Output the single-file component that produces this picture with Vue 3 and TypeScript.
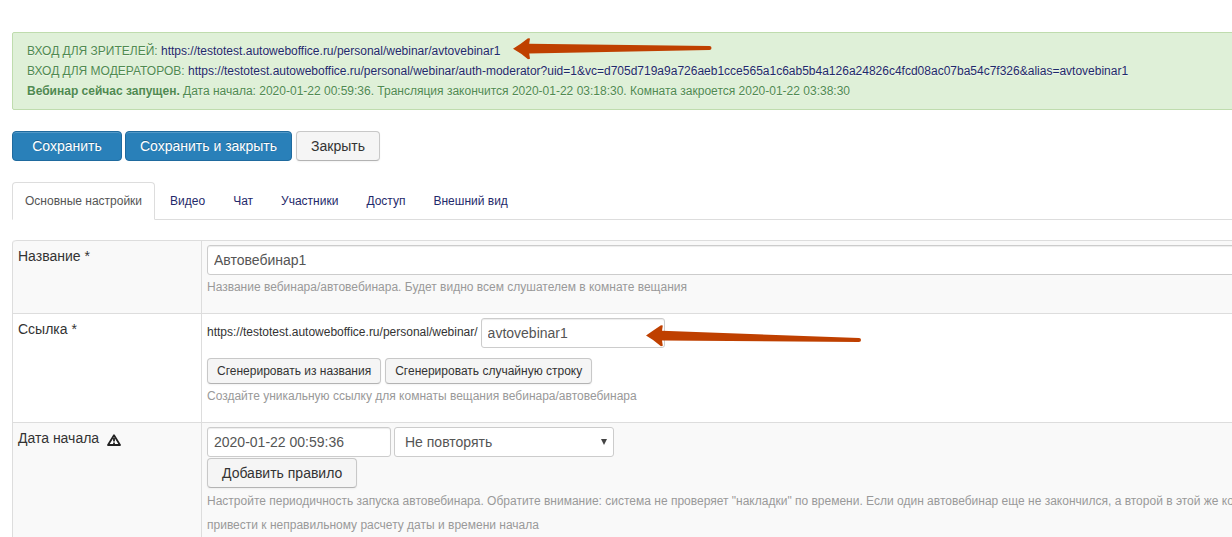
<script setup lang="ts">
import { ref } from 'vue'

const site = 'https://testotest.autoweboffice.ru/personal/webinar/'
const moderatorUrl =
  site + 'auth-moderator?uid=1&vc=d705d719a9a726aeb1cce565a1c6ab5b4a126a24826c4fcd08ac07ba54c7f326&alias=avtovebinar1'

const tabs = ['Основные настройки', 'Видео', 'Чат', 'Участники', 'Доступ', 'Внешний вид']
const activeTab = ref(0)

const title = ref('Автовебинар1')
const slug = ref('avtovebinar1')
const startDate = ref('2020-01-22 00:59:36')
const repeat = ref('Не повторять')
</script>

<template>
  <main class="page">
    <section class="alert">
      <p>
        ВХОД ДЛЯ ЗРИТЕЛЕЙ:
        <span class="anchor"><a :href="site + 'avtovebinar1'">{{ site }}avtovebinar1</a>
          <svg class="arrow arrow-viewers" width="200" height="22" viewBox="0 0 200 22" aria-hidden="true">
            <path d="M0 10.7 Q8 6 15 .3 L17 .5 L16.2 5.8 L196.5 8 Q198.5 8 198.5 10 Q198.5 12 196.5 12 L16.2 15.5 L17 20.8 L15 21.3 Q8 15 0 10.7Z" />
          </svg>
        </span>
      </p>
      <p>ВХОД ДЛЯ МОДЕРАТОРОВ: <a :href="moderatorUrl">{{ moderatorUrl }}</a></p>
      <p>
        <strong>Вебинар сейчас запущен.</strong> Дата начала: 2020-01-22 00:59:36. Трансляция закончится
        2020-01-22 03:18:30. Комната закроется 2020-01-22 03:38:30
      </p>
    </section>

    <form @submit.prevent>
      <div class="actions">
        <button class="btn primary save" type="submit">Сохранить</button>
        <button class="btn primary" type="submit">Сохранить и закрыть</button>
        <button class="btn close" type="button">Закрыть</button>
      </div>

      <nav class="tabs">
        <a
          v-for="(tab, i) in tabs"
          :key="tab"
          href="#"
          :class="{ active: i === activeTab }"
          @click.prevent="activeTab = i"
        >{{ tab }}</a>
      </nav>

      <table class="settings">
        <tbody>
          <tr>
            <th scope="row"><label for="title">Название *</label></th>
            <td>
              <input id="title" v-model="title" class="wide" type="text" />
              <p class="help">Название вебинара/автовебинара. Будет видно всем слушателем в комнате вещания</p>
            </td>
          </tr>
          <tr>
            <th scope="row"><label for="slug">Ссылка *</label></th>
            <td>
              <div class="line slug-line">
                <span class="prefix">{{ site }}</span>
                <span class="anchor">
                  <input id="slug" v-model="slug" type="text" />
                  <svg class="arrow arrow-slug" width="216" height="22" viewBox="0 0 216 22" aria-hidden="true">
                    <path d="M0 10.5 Q8 5 15 .3 L16.8 .6 L16 5.8 L213 12.9 Q215 13 215 15 Q215 17 213 17 L16 15.4 L16.8 20.8 L15 21.3 Q8 15 0 10.5Z" />
                  </svg>
                </span>
              </div>
              <div class="line buttons">
                <button class="btn small" type="button">Сгенерировать из названия</button>
                <button class="btn small" type="button">Сгенерировать случайную строку</button>
              </div>
              <p class="help">Создайте уникальную ссылку для комнаты вещания вебинара/автовебинара</p>
            </td>
          </tr>
          <tr>
            <th scope="row">
              <label for="start">Дата начала</label>
              <svg class="warn" width="14" height="12" viewBox="0 0 14 12" aria-hidden="true">
                <path d="M7 1.2 L13 11 H1Z" fill="#fff" stroke="#222" stroke-width="1.8" stroke-linejoin="round" />
                <path d="M7 4 V7.5 M7 8.5 V10" stroke="#222" stroke-width="1.8" />
              </svg>
            </th>
            <td>
              <div class="line date-line">
                <input id="start" v-model="startDate" type="text" />
                <span class="select">
                  <select v-model="repeat" aria-label="Повтор">
                    <option>Не повторять</option>
                  </select>
                  <svg width="6" height="6" viewBox="0 0 6 6" aria-hidden="true"><path d="M0 0H6L3 6Z" fill="#444" /></svg>
                </span>
              </div>
              <button class="btn rule" type="button">Добавить правило</button>
              <p class="help">
                Настройте периодичность запуска автовебинара. Обратите внимание: система не проверяет "накладки" по
                времени. Если один автовебинар еще не закончился, а второй в этой же ко<br />
                привести к неправильному расчету даты и времени начала
              </p>
            </td>
          </tr>
        </tbody>
      </table>
    </form>
  </main>
</template>

<style>
body {
  overflow: hidden;
  background: #fff;
}
</style>

<style scoped>
.page {
  margin-right: -24px;
  padding: 32px 0 0 12px;
  font: 12px/20px "Liberation Sans", Arial, sans-serif;
  color: #333;
}
p {
  margin: 0;
}
a {
  color: #1f2a6b;
  text-decoration: none;
}
.alert {
  padding: 8px 14px;
  border: 1px solid #bfdcae;
  border-radius: 2px;
  background: #dff0d8;
  color: #4f8a50;
  white-space: nowrap;
  text-shadow: 0 1px 0 rgba(255, 255, 255, 0.5);
}
.anchor {
  position: relative;
  display: inline-block;
}
.arrow {
  position: absolute;
  fill: #bf4000;
}
.arrow-viewers {
  left: calc(100% + 13px);
  top: -3px;
}
.arrow-slug {
  left: 165px;
  top: 7px;
}
.actions {
  display: flex;
  gap: 3px;
  margin-top: 21px;
}
.btn {
  height: 30px;
  padding: 0 14px;
  border: 1px solid #c8c8c8;
  border-bottom-color: #b3b3b3;
  border-radius: 4px;
  background: #f5f5f5;
  color: #333;
  font: 14px/20px "Liberation Sans", Arial, sans-serif;
  white-space: nowrap;
  box-shadow: 0 1px 2px rgba(0, 0, 0, 0.05);
}
.primary {
  border-color: #1f6a9e;
  background: #2980b9;
  color: #fff;
  box-shadow: inset 0 1px 0 rgba(255, 255, 255, 0.2);
  text-shadow: 0 -1px 0 rgba(0, 0, 0, 0.25);
}
.save {
  min-width: 110px;
}
.close {
  margin-left: 1px;
}
.small {
  height: 26px;
  padding: 0 9px;
  font-size: 12px;
}
.tabs {
  display: flex;
  gap: 2px;
  margin-top: 21px;
  border-bottom: 1px solid #ddd;
}
.tabs a {
  margin-bottom: -1px;
  padding: 8px 12px;
  border: 1px solid transparent;
  border-radius: 4px 4px 0 0;
}
.tabs a.active {
  border-color: #ddd #ddd #fff;
  background: #fff;
  color: #555;
}
.settings {
  width: 100%;
  margin-top: 20px;
  border: 1px solid #ddd;
  border-top: 0;
  border-radius: 4px;
  border-spacing: 0;
  table-layout: fixed;
}
th,
td {
  padding: 4px 5px;
  border-top: 1px solid #ddd;
  text-align: left;
  vertical-align: top;
}
th {
  width: 178px;
  font-size: 14px;
  font-weight: 400;
  line-height: 22px;
}
td {
  border-left: 1px solid #ddd;
  white-space: nowrap;
}
tr:first-child th {
  border-top-left-radius: 4px;
}
tr:nth-child(odd) > * {
  background: #f9f9f9;
}
input,
select {
  display: block;
  box-sizing: border-box;
  width: 184px;
  height: 30px;
  padding: 4px 6px;
  border: 1px solid #ccc;
  border-radius: 3px;
  background: #fff;
  color: #555;
  font: 14px/20px "Liberation Sans", Arial, sans-serif;
  box-shadow: inset 0 1px 1px rgba(0, 0, 0, 0.075);
}
.wide {
  width: 100%;
}
.help {
  margin-bottom: 10px;
  line-height: 24px;
  color: #999;
}
.line {
  display: flex;
  gap: 3px;
}
.slug-line {
  margin-bottom: 10px;
}
.prefix {
  line-height: 28px;
}
.buttons {
  gap: 4px;
}
.date-line {
  margin-bottom: 1px;
}
.rule {
  display: block;
  margin-bottom: 1px;
}
.select {
  position: relative;
}
.select svg {
  position: absolute;
  right: 7px;
  top: 12px;
}
select {
  width: 220px;
  padding-left: 10px;
  appearance: none;
  box-shadow: none;
}
.warn {
  margin-left: 4px;
  vertical-align: -3px;
}
label + .warn {
  margin-left: 8px;
}
</style>
